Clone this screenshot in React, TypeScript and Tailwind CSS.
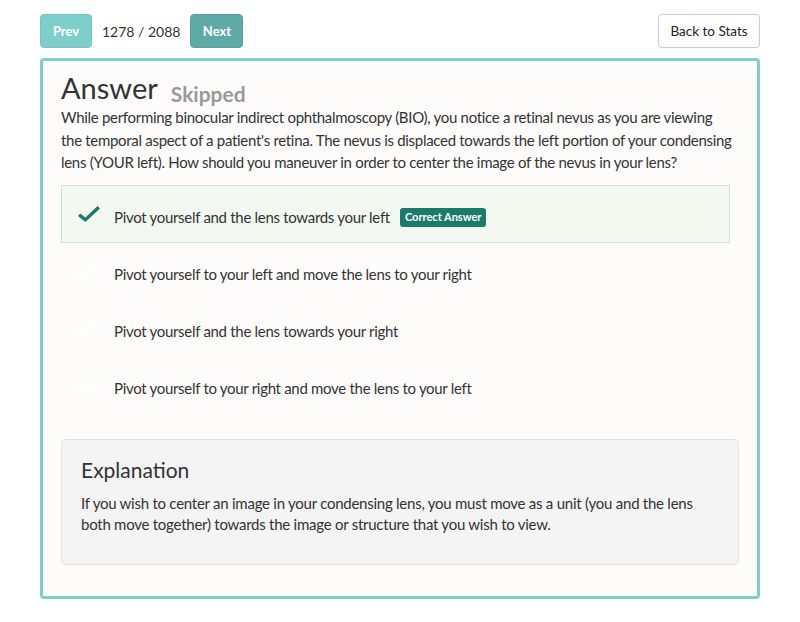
import React from "react";

const Check = ({ color }: { color: string }) => (
  <svg width="22" height="16" viewBox="0 0 22 16" fill={color}>
    <path d="M2.2 7.6 L0 9.9 L7.4 16 L22 2.4 L19.6 0 L7.4 11.4 Z" />
  </svg>
);

const options = [
  { text: "Pivot yourself and the lens towards your left", correct: true },
  { text: "Pivot yourself to your left and move the lens to your right", correct: false },
  { text: "Pivot yourself and the lens towards your right", correct: false },
  { text: "Pivot yourself to your right and move the lens to your left", correct: false },
];

export default function App() {
  return (
    <div
      className="w-[800px] h-[622px] bg-white text-[#333]"
      style={{ fontFamily: "Lato, 'Noto Sans', sans-serif" }}
    >
      <div className="pt-[14px] px-[40px]">
        <div className="flex items-center justify-between h-[34px]">
          <div className="flex items-center">
            <button className="h-[34px] w-[52px] rounded-[4px] bg-[#7ecfcc] border border-[#74c5c2] text-white font-bold text-[13px] pt-[1px]">
              Prev
            </button>
            <span className="ml-[10px] mr-[10px] text-[14px] text-[#333]">1278 / 2088</span>
            <button className="h-[34px] w-[53px] rounded-[4px] bg-[#5eaaa7] border border-[#57a19e] text-white font-bold text-[13px] pt-[1px]">
              Next
            </button>
          </div>
          <button className="h-[34px] w-[102px] rounded-[4px] bg-white border border-[#cccccc] text-[13.5px] text-[#222]">
            Back to Stats
          </button>
        </div>
        <div className="mt-[10px] h-[541px] rounded-[4px] border-[3px] border-[#7ecfcc] bg-[#fdfcfb] pl-[18px] pr-[18px] pt-[5px]">
          <div className="flex items-end h-[40px]">
            <h1 className="text-[29px] leading-[36px] text-[#333]">Answer</h1>
            <span className="ml-[13px] text-[21px] font-bold text-[#999] leading-[36px] relative top-[6px]">
              Skipped
            </span>
          </div>
          <p className="mt-[0px] text-[15px] leading-[22.5px] tracking-[-0.3px] text-[#333] whitespace-nowrap">
            While performing binocular indirect ophthalmoscopy (BIO), you notice a retinal nevus as you are viewing
            <br />
            the temporal aspect of a patient's retina. The nevus is displaced towards the left portion of your condensing
            <br />
            lens (YOUR left). How should you maneuver in order to center the image of the nevus in your lens?
          </p>
          <div className="mt-[11px] w-[669px]">
            {options.map((o, i) => (
              <div
                key={i}
                className={
                  "flex items-center border " +
                  (o.correct ? "h-[58px] bg-[#f3f9f1] border-[#cce4c8]" : "h-[57px] border-transparent")
                }
              >
                <div className="w-[52px] pl-[16px] flex items-center">
                  <Check color={o.correct ? "#1b7b6b" : "#ffffff"} />
                </div>
                <div className="flex items-center pt-[7px]">
                  <span className="text-[15px] tracking-[-0.3px] text-[#333]">{o.text}</span>
                  {o.correct && (
                    <span className="ml-[10px] h-[19px] px-[5px] rounded-[3px] bg-[#1b7b6b] text-white text-[11px] font-bold flex items-center">
                      Correct Answer
                    </span>
                  )}
                </div>
              </div>
            ))}
          </div>
          <div className="mt-[25px] w-[678px] h-[126px] rounded-[4px] border border-[#e3e3e3] bg-[#f4f4f4] px-[19px] pt-[17px]">
            <h2 className="text-[21px] leading-[26px] text-[#333]">Explanation</h2>
            <p className="mt-[10px] text-[15px] leading-[21px] tracking-[-0.25px] text-[#333] whitespace-nowrap">
              If you wish to center an image in your condensing lens, you must move as a unit (you and the lens
              <br />
              both move together) towards the image or structure that you wish to view.
            </p>
          </div>
        </div>
      </div>
    </div>
  );
}
